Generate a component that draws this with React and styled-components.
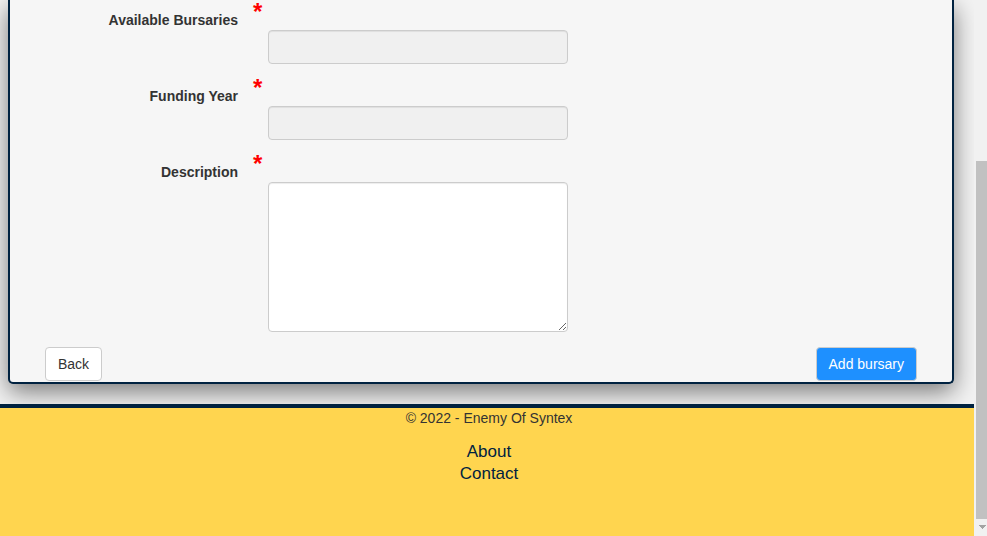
import React from "react";
import styled, { createGlobalStyle } from "styled-components";

const GlobalStyle = createGlobalStyle`
  * { box-sizing: border-box; }
  html, body, #root { height: 100%; }
  body {
    margin: 0;
    overflow: hidden;
    background: #f3f3f3;
    color: #333;
    font: 14px/20px "Liberation Sans", Arial, sans-serif;
  }
`;

const Window = styled.div`
  display: flex;
  height: 100%;
`;

const Page = styled.div`
  flex: 1;
  min-width: 0;
  display: flex;
  flex-direction: column;
  overflow: hidden;
`;

const Panel = styled.form`
  margin: 0 20px 20px 8px;
  padding: 3px 35px 1px;
  border: 2px solid #002240;
  border-top: 0;
  border-radius: 0 0 5px 5px;
  background: #f6f6f6;
  box-shadow: 0 8px 24px rgba(0, 0, 0, 0.5);
`;

const Field = styled.div`
  display: grid;
  grid-template-columns: 193px minmax(0, 300px);
  column-gap: 30px;
  margin-bottom: 15px;
`;

const Label = styled.label`
  padding-top: 7px;
  text-align: right;
  font-weight: bold;
`;

const Entry = styled.div`
  display: flex;
  flex-direction: column;
`;

const Required = styled.span`
  height: 27px;
  margin-left: -15px;
  color: red;
  font-size: 24px;
  font-weight: bold;
  line-height: 18px;
`;

const Input = styled.input`
  width: 100%;
  height: 34px;
  padding: 6px 12px;
  border: 1px solid #ccc;
  border-radius: 4px;
  background: #f0f0f0;
  box-shadow: inset 0 1px 1px rgba(0, 0, 0, 0.075);
  font: inherit;
`;

const TextArea = styled.textarea`
  display: block;
  width: 100%;
  height: 150px;
  padding: 6px 12px;
  border: 1px solid #ccc;
  border-radius: 4px;
  background: #fff;
  box-shadow: inset 0 1px 1px rgba(0, 0, 0, 0.075);
  font: inherit;
`;

const Actions = styled.div`
  display: flex;
  justify-content: space-between;
`;

const Button = styled.button`
  height: 34px;
  padding: 6px 12px;
  border: 1px solid #ccc;
  border-radius: 4px;
  background: ${(p) => (p.$primary ? "#1e90ff" : "#fff")};
  color: ${(p) => (p.$primary ? "#fff" : "#333")};
  font: inherit;
`;

const Footer = styled.footer`
  flex: 1;
  border-top: 4px solid #002240;
  padding-left: 4px;
  background: #ffd54f;
  text-align: center;
`;

const Copyright = styled.p`
  margin: 0 0 13px;
`;

const FooterLinks = styled.nav`
  display: flex;
  flex-direction: column;
  align-items: center;
`;

const FooterLink = styled.a`
  color: #002240;
  font-size: 17px;
  line-height: 22px;
  text-decoration: none;
`;

const Scrollbar = styled.div`
  width: 13px;
  padding-left: 2px;
  display: flex;
  flex-direction: column;
  background: #f1f1f1;
`;

const Track = styled.div`
  flex: 1;
  display: flex;
  flex-direction: column;
  justify-content: flex-end;
`;

const Thumb = styled.div`
  height: 69%;
  background: #c1c1c1;
`;

const ScrollArrow = styled.svg`
  display: block;
  width: 11px;
  height: 17px;
`;

const fields = [
  { id: "available", label: "Available Bursaries" },
  { id: "year", label: "Funding Year" },
  { id: "description", label: "Description", multiline: true },
];

export default function App() {
  return (
    <Window>
      <GlobalStyle />
      <Page>
        <Panel onSubmit={(e) => e.preventDefault()}>
          {fields.map((f) => (
            <Field key={f.id}>
              <Label htmlFor={f.id}>{f.label}</Label>
              <Entry>
                <Required aria-hidden="true">*</Required>
                {f.multiline ? (
                  <TextArea id={f.id} required />
                ) : (
                  <Input id={f.id} type="text" required />
                )}
              </Entry>
            </Field>
          ))}
          <Actions>
            <Button type="button">Back</Button>
            <Button type="submit" $primary>Add bursary</Button>
          </Actions>
        </Panel>
        <Footer>
          <Copyright>© 2022 - Enemy Of Syntex</Copyright>
          <FooterLinks>
            <FooterLink href="#about">About</FooterLink>
            <FooterLink href="#contact">Contact</FooterLink>
          </FooterLinks>
        </Footer>
      </Page>
      <Scrollbar aria-hidden="true">
        <Track>
          <Thumb />
        </Track>
        <ScrollArrow viewBox="0 0 11 17" shapeRendering="crispEdges">
          <path d="M3 6h7v1h-1v1h-1v1h-1v1h-1v-1h-1v-1h-1v-1h-1z" fill="#a3a3a3" />
        </ScrollArrow>
      </Scrollbar>
    </Window>
  );
}
